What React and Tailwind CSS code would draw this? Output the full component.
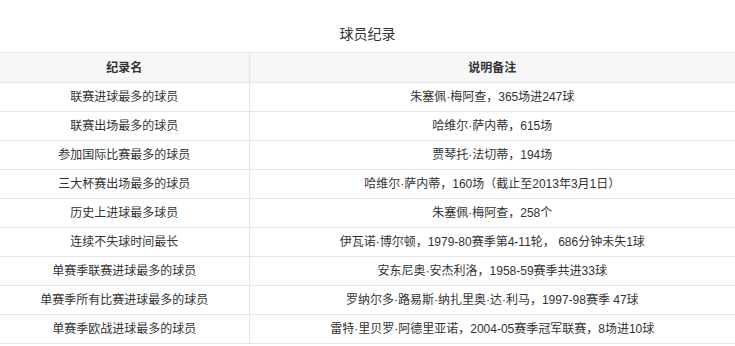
const rows = [
  ['联赛进球最多的球员', '朱塞佩·梅阿查，365场进247球'],
  ['联赛出场最多的球员', '哈维尔·萨内蒂，615场'],
  ['参加国际比赛最多的球员', '贾琴托·法切蒂，194场'],
  ['三大杯赛出场最多的球员', '哈维尔·萨内蒂，160场（截止至2013年3月1日）'],
  ['历史上进球最多球员', '朱塞佩·梅阿查，258个'],
  ['连续不失球时间最长', '伊瓦诺·博尔顿，1979-80赛季第4-11轮， 686分钟未失1球'],
  ['单赛季联赛进球最多的球员', '安东尼奥·安杰利洛，1958-59赛季共进33球'],
  ['单赛季所有比赛进球最多的球员', '罗纳尔多·路易斯·纳扎里奥·达·利马，1997-98赛季 47球'],
  ['单赛季欧战进球最多的球员', '雷特·里贝罗·阿德里亚诺，2004-05赛季冠军联赛，8场进10球'],
];

export default function App() {
  return (
    <div
      className="w-[735px] h-[346px] bg-white text-[#333] overflow-hidden"
      style={{ fontFamily: '"Liberation Sans", "Noto Sans CJK SC", sans-serif' }}
    >
      <div className="h-[52px] flex items-end justify-center pb-[8px]">
        <span className="text-[14px] leading-[20px]">球员纪录</span>
      </div>
      <table className="w-full border-collapse text-[12px] table-fixed">
        <colgroup>
          <col className="w-[249px]" />
          <col />
        </colgroup>
        <thead>
          <tr className="h-[30px] bg-[#f7f7f7]">
            <th className="border-y border-[#e6e6e6] border-r font-bold text-center">纪录名</th>
            <th className="border-y border-[#e6e6e6] font-bold text-center">说明备注</th>
          </tr>
        </thead>
        <tbody>
          {rows.map(([name, note]) => (
            <tr key={name} className="h-[29px]">
              <td className="border-b border-r border-[#e6e6e6] text-center p-0">{name}</td>
              <td className="border-b border-[#e6e6e6] text-center p-0">{note}</td>
            </tr>
          ))}
        </tbody>
      </table>
    </div>
  );
}
